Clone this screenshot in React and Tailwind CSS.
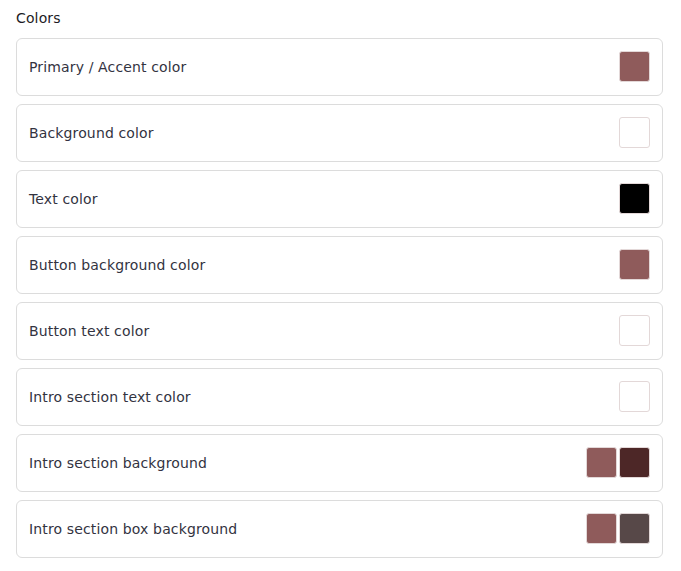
import React from "react";

const rows = [
  { label: "Primary / Accent color", colors: ["#8f5b5b"] },
  { label: "Background color", colors: ["#ffffff"] },
  { label: "Text color", colors: ["#000000"] },
  { label: "Button background color", colors: ["#8f5b5b"] },
  { label: "Button text color", colors: ["#ffffff"] },
  { label: "Intro section text color", colors: ["#ffffff"] },
  { label: "Intro section background", colors: ["#8f5b5b", "#4d2727"] },
  { label: "Intro section box background", colors: ["#8f5b5b", "#574848"] },
];

export default function App() {
  return (
    <div
      className="w-[681px] h-[571px] bg-white px-4 pt-2"
      style={{ fontFamily: '"DejaVu Sans", "Open Sans", sans-serif' }}
    >
      <div className="text-[14px] leading-5 text-[#1c1c24] mb-[10px] tracking-[0.01em]">Colors</div>
      <div className="flex flex-col gap-2 w-[647px]">
        {rows.map((r) => (
          <div
            key={r.label}
            className="flex items-center justify-between border border-[#dcdcdc] rounded-md pl-3 pr-3 h-[58px]"
          >
            <span className="text-[14px] text-[#33333f] tracking-[0.01em]">{r.label}</span>
            <div className="flex gap-[2px] -mt-[1px]">
              {r.colors.map((c, i) => (
                <div
                  key={i}
                  className="w-[31px] h-[31px] rounded-[3px] border border-[#e3d8d8]"
                  style={{ backgroundColor: c }}
                />
              ))}
            </div>
          </div>
        ))}
      </div>
    </div>
  );
}
